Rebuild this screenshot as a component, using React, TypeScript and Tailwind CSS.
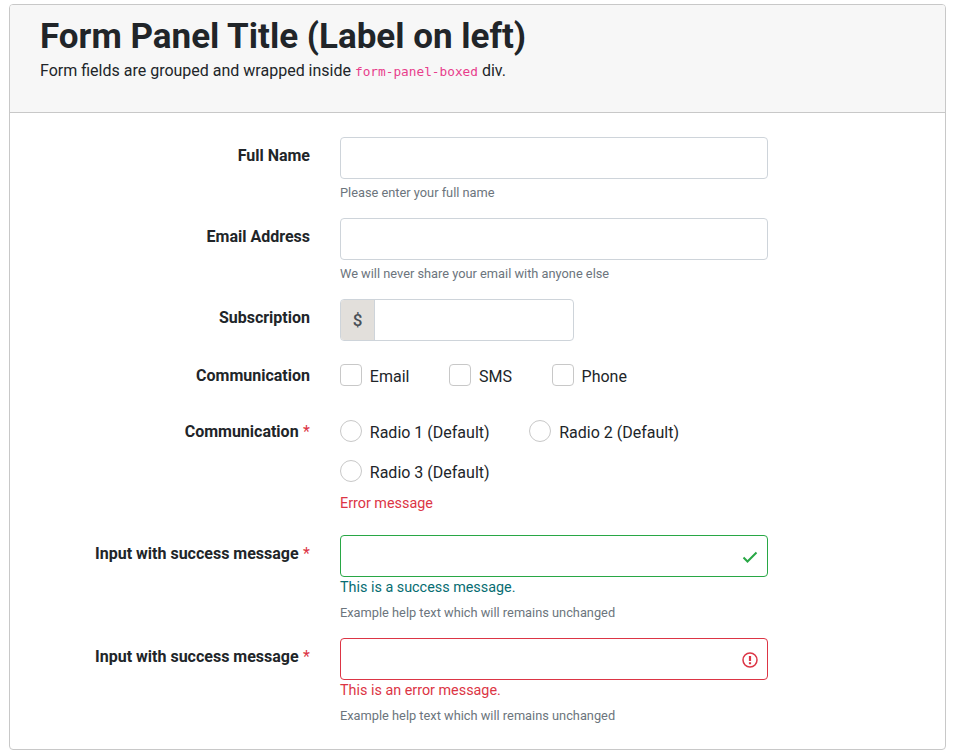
import React from "react";

const roboto = "font-['Roboto',sans-serif]";

function Row({ label, required, className, children }: { label: string; required?: boolean; className?: string; children: React.ReactNode }) {
  return (
    <div className={`flex ${className ?? ""}`}>
      <div className="w-[300px] shrink-0 pt-[7px] text-right text-[16px] leading-6 font-bold text-[#212529]">
        {label}
        {required && <span className="ml-[4.5px] font-normal text-[#dc3545]">*</span>}
      </div>
      <div className="ml-[30px] w-[428px]">{children}</div>
    </div>
  );
}

function Input({ className, children }: { className?: string; children?: React.ReactNode }) {
  return (
    <div className={`relative h-[42px] rounded-[4px] border bg-white ${className ?? "border-[#ced4da]"}`}>
      <input className="h-full w-full bg-transparent px-3 outline-none" />
      {children}
    </div>
  );
}

function Help({ children, className }: { children: React.ReactNode; className?: string }) {
  return <div className={`text-[12.8px] leading-5 text-[#6c757d] ${className ?? ""}`}>{children}</div>;
}

function Choice({ label, round, className }: { label: string; round?: boolean; className?: string }) {
  return (
    <label className={`flex h-[22px] items-start ${className ?? ""}`}>
      <span className={`h-[22px] w-[22px] border border-[#c8c8c8] bg-white ${round ? "rounded-full" : "rounded-[4px]"}`} />
      <span className="ml-[7.8px] pt-px text-[16px] leading-6 text-[#212529]">{label}</span>
    </label>
  );
}

export default function App() {
  return (
    <div className={`h-[754px] bg-white pt-[4px] pl-[9px] text-[#212529] ${roboto}`}>
      <section className="h-[746px] w-[937px] overflow-hidden rounded-[4px] border border-[#c8c8c8]">
        <header className="h-[108px] border-b border-[#c8c8c8] bg-[#f7f7f7] pl-[30px]">
          <h1 className="pt-[9px] text-[35px] leading-[45px] font-bold">Form Panel Title (Label on left)</h1>
          <p className="text-[16px] leading-6">
            Form fields are grouped and wrapped inside{" "}
            <code className="font-['DejaVu_Sans_Mono',monospace] text-[12.77px] leading-none text-[#e83e8c]">form-panel-boxed</code> div.
          </p>
        </header>
        <form className="pt-6">
          <Row label="Full Name" className="h-[81px]">
            <Input />
            <Help className="mt-[4px]">Please enter your full name</Help>
          </Row>
          <Row label="Email Address" className="h-[81px]">
            <Input />
            <Help className="mt-[4px]">We will never share your email with anyone else</Help>
          </Row>
          <Row label="Subscription" className="h-[58px]">
            <div className="flex h-[42px] w-[234px] overflow-hidden rounded-[4px] border border-[#ced4da]">
              <span className="flex w-[34px] items-center justify-center border-r border-[#ced4da] bg-[#e2dfdb] pt-[2px] text-[17px] font-medium text-[#495057]">$</span>
              <input className="w-[198px] px-3 outline-none" />
            </div>
          </Row>
          <Row label="Communication" className="h-[56px]">
            <div className="flex pt-[7px]">
              <Choice label="Email" />
              <Choice label="SMS" className="ml-[39.8px]" />
              <Choice label="Phone" className="ml-[39.8px]" />
            </div>
          </Row>
          <Row label="Communication" required className="h-[122px]">
            <div className="flex flex-wrap gap-x-[39.8px] gap-y-[18px] pt-[7px]">
              <Choice label="Radio 1 (Default)" round />
              <Choice label="Radio 2 (Default)" round />
              <Choice label="Radio 3 (Default)" round />
            </div>
            <div className="mt-[11px] text-[14.36px] leading-[22px] text-[#dc3545]">Error message</div>
          </Row>
          <Row label="Input with success message" required className="h-[103px]">
            <Input className="border-[#28a745]">
              <svg className="absolute top-[15px] right-[9px]" width="16" height="13" viewBox="0 0 16 13" fill="none" stroke="#28a745" strokeWidth="2">
                <path d="M1.5 6.5 5.5 10.5 14.5 1.5" />
              </svg>
            </Input>
            <div className="text-[14.36px] leading-[22px] text-[#076d72]">This is a success message.</div>
            <Help className="mt-[4px]">Example help text which will remains unchanged</Help>
          </Row>
          <Row label="Input with success message" required>
            <Input className="border-[#dc3545]">
              <svg className="absolute top-[13px] right-[9px]" width="16" height="16" viewBox="0 0 16 16" fill="none" stroke="#dc3545">
                <circle cx="8" cy="8" r="7" strokeWidth="1.5" />
                <path d="M8 4v5M8 10.3v2" strokeWidth="2.2" />
              </svg>
            </Input>
            <div className="text-[14.36px] leading-[22px] text-[#dc3545]">This is an error message.</div>
            <Help className="mt-[4px]">Example help text which will remains unchanged</Help>
          </Row>
        </form>
      </section>
    </div>
  );
}
